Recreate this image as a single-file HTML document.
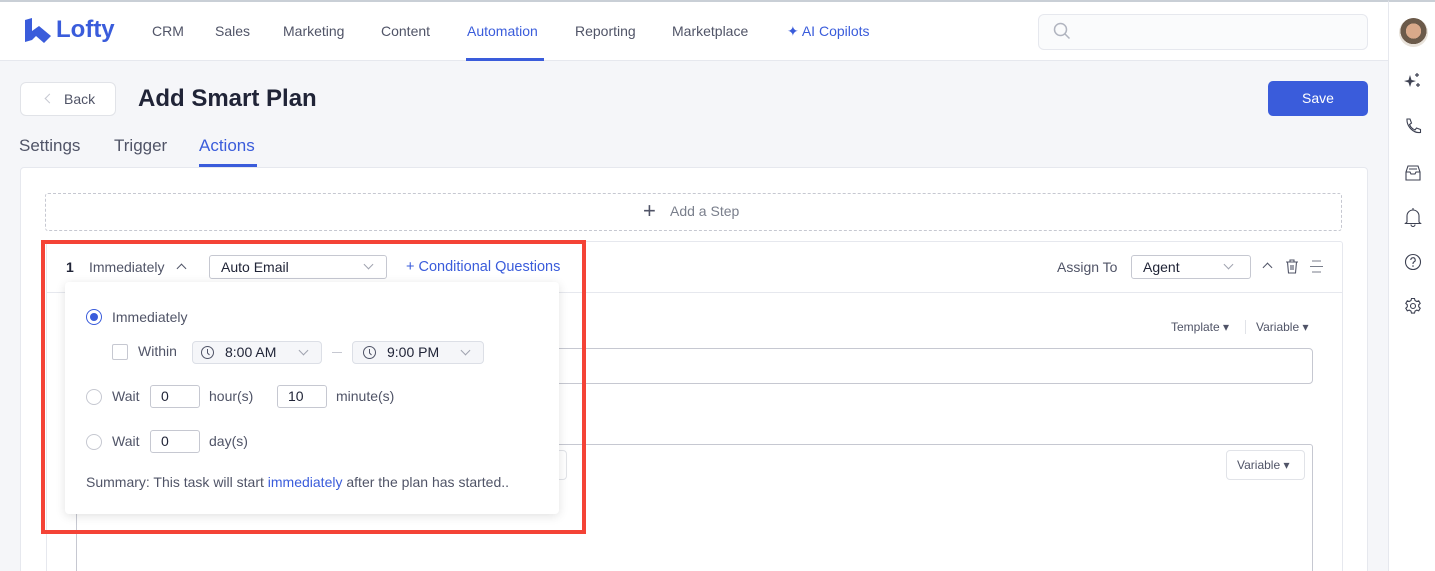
<!DOCTYPE html>
<html style="width:1435px;height:571px;overflow:hidden"><head><meta charset="utf-8"><style>
*{box-sizing:border-box;margin:0;padding:0}
body{width:1435px;height:571px;overflow:hidden;background:#f5f6f9;font-family:"Liberation Sans",sans-serif;color:#202437;position:relative;font-size:14px}
.a{position:absolute}
.nav{left:0;top:0;width:1388px;height:61px;background:#fff;border-top:2px solid #c9cfd6;border-bottom:1px solid #e6e8ee}
.nav span{position:absolute;top:21px;font-size:14px;color:#505467}
.side{left:1388px;top:0;width:47px;height:571px;background:#fff;border-left:1px solid #e6e8ee;border-top:2px solid #c9cfd6}
.sel{position:absolute;border:1px solid #c6c8d1;border-radius:3px;background:#fff;font-size:14px;color:#202437;padding-left:11px;line-height:22px}
.chev{position:absolute;width:7px;height:7px;border-right:1px solid #a0a3af;border-bottom:1px solid #a0a3af;transform:rotate(45deg)}
.radio{position:absolute;width:16px;height:16px;border:1px solid #c6c8d1;border-radius:50%;background:#fff}
.inp{position:absolute;width:50px;height:23px;border:1px solid #c6c8d1;border-radius:3px;padding-left:10px;line-height:21px;font-size:14px}
.t{position:absolute;font-size:14px;color:#505467}
.ts{position:absolute;height:23px;width:130px;background:#f5f6f9;border:1px solid #dcdfe6;border-radius:4px}
</style></head><body>
<div class="a nav">
  <svg class="a" style="left:24px;top:16px" width="28" height="26" viewBox="0 0 28 26"><path d="M1 2 L8 0 L8 13 L15 8 L27 18 L20 25 L12 18 L8 22 L1 24Z" fill="#3a5cdb"/></svg>
  <div class="a" style="left:56px;top:14px;font-size:24px;font-weight:bold;color:#3a5cdb">Lofty</div>
  <span style="left:152px">CRM</span><span style="left:215px">Sales</span><span style="left:283px">Marketing</span><span style="left:381px">Content</span>
  <span style="left:467px;color:#3a5cdb">Automation</span>
  <div class="a" style="left:466px;top:56px;width:78px;height:3px;background:#3a5cdb"></div>
  <span style="left:575px">Reporting</span><span style="left:672px">Marketplace</span>
  <span style="left:787px;color:#3a5cdb">✦ AI Copilots</span>
  <div class="a" style="left:1038px;top:12px;width:330px;height:36px;border:1px solid #e6e8ee;border-radius:6px;background:#fafbfc"></div>
  <svg class="a" style="left:1053px;top:20px" width="18" height="18" viewBox="0 0 18 18"><circle cx="7.5" cy="7.5" r="6" fill="none" stroke="#b0b4bf" stroke-width="1.5"/><path d="M12 12l4.5 4.5" stroke="#b0b4bf" stroke-width="1.5"/></svg>
</div>
<div class="a side">
  <div class="a" style="left:10px;top:16px;width:29px;height:29px;border-radius:50%;background:radial-gradient(circle at 50% 45%,#d9a98a 0 35%,#6b5a4a 36% 60%,#e8e2da 61%)"></div>
  <svg class="a" style="left:14px;top:70px" width="20" height="18" viewBox="0 0 20 18"><path d="M7 3 L8.5 8 L13 9 L8.5 10.5 L7 15 L5.5 10.5 L1 9 L5.5 8Z" fill="#3d4152"/><path d="M14 1v4M12 3h4M15 11v4M13 13h4" stroke="#3d4152" stroke-width="1.2"/></svg>
  <svg class="a" style="left:15px;top:115px" width="18" height="18" viewBox="0 0 18 18"><path d="M3 2l3 0 1.5 4-2 1.5c1 2.5 3 4.5 5.5 5.5l1.5-2 4 1.5v3c-7 1-14-6-13.5-13.5z" fill="none" stroke="#3d4152" stroke-width="1.1"/></svg>
  <svg class="a" style="left:15px;top:162px" width="18" height="18" viewBox="0 0 18 18"><path d="M2 8l2-6h10l2 6v8H2zM2 8h4l1 2h4l1-2h4M5 5h8" fill="none" stroke="#3d4152" stroke-width="1.1"/></svg>
  <svg class="a" style="left:15px;top:205px" width="18" height="20" viewBox="0 0 18 20"><path d="M3 15V9a6 6 0 0 1 12 0v6l1.5 1.5h-15zM7 17.5a2 2 0 0 0 4 0M9 1v2" fill="none" stroke="#3d4152" stroke-width="1.1"/></svg>
  <svg class="a" style="left:15px;top:251px" width="18" height="18" viewBox="0 0 18 18"><circle cx="9" cy="9" r="7.5" fill="none" stroke="#3d4152" stroke-width="1.1"/><path d="M6.8 7a2.2 2.2 0 1 1 3 2c-.8.4-.8 1-.8 2" fill="none" stroke="#3d4152" stroke-width="1.1"/><circle cx="9" cy="13" r=".8" fill="#3d4152"/></svg>
  <svg class="a" style="left:15px;top:295px" width="18" height="18" viewBox="0 0 18 18"><circle cx="9" cy="9" r="2.5" fill="none" stroke="#3d4152" stroke-width="1.1"/><path d="M7.5 1.5h3l.5 2 1.7 1 2-.7 1.5 2.6-1.5 1.4v2l1.5 1.4-1.5 2.6-2-.7-1.7 1-.5 2h-3l-.5-2-1.7-1-2 .7-1.5-2.6 1.5-1.4v-2L1.8 6.4l1.5-2.6 2 .7 1.7-1z" fill="none" stroke="#3d4152" stroke-width="1.1"/></svg>
</div>
<div class="a" style="left:20px;top:82px;width:96px;height:34px;background:#fff;border:1px solid #e1e3e8;border-radius:6px"></div>
<div class="chev" style="left:46px;top:95px;transform:rotate(135deg);border-color:#c6c8d1"></div>
<div class="t" style="left:64px;top:91px;color:#505467">Back</div>
<div class="a" style="left:138px;top:85px;font-size:24px;font-weight:bold;color:#202437">Add Smart Plan</div>
<div class="a" style="left:1268px;top:81px;width:100px;height:35px;background:#3a5cdb;border-radius:5px;color:#fff;text-align:center;line-height:35px;font-size:14px">Save</div>
<div class="a" style="left:19px;top:136px;font-size:17px;color:#505467">Settings</div>
<div class="a" style="left:114px;top:136px;font-size:17px;color:#505467">Trigger</div>
<div class="a" style="left:199px;top:136px;font-size:17px;color:#3a5cdb">Actions</div>
<div class="a" style="left:199px;top:164px;width:58px;height:3px;background:#3a5cdb"></div>
<div class="a" style="left:20px;top:167px;width:1348px;height:420px;background:#fff;border:1px solid #e6e8ee;border-radius:4px"></div>
<div class="a" style="left:45px;top:193px;width:1297px;height:38px;border:1px dashed #c6c8d1;border-radius:3px"></div>
<div class="a" style="left:643px;top:200px;font-size:22px;color:#505467;line-height:22px">+</div>
<div class="t" style="left:670px;top:203px;color:#797e8b">Add a Step</div>
<div class="a" style="left:46px;top:241px;width:1297px;height:340px;border:1px solid #e6e8ee;border-radius:3px"></div>
<div class="a" style="left:46px;top:292px;width:1297px;height:1px;background:#e6e8ee"></div>
<div class="a" style="left:66px;top:259px;font-weight:bold;font-size:14px">1</div>
<div class="t" style="left:89px;top:259px">Immediately</div>
<div class="chev" style="left:178px;top:265px;transform:rotate(225deg);border-color:#505467"></div>
<div class="sel" style="left:209px;top:255px;width:178px;height:24px">Auto Email</div>
<div class="chev" style="left:365px;top:261px"></div>
<div class="t" style="left:406px;top:259px;color:#3a5cdb;font-size:14.5px">+ Conditional Questions</div>
<div class="t" style="left:1057px;top:259px">Assign To</div>
<div class="sel" style="left:1131px;top:255px;width:120px;height:24px">Agent</div>
<div class="chev" style="left:1225px;top:261px"></div>
<div class="chev" style="left:1264px;top:264px;transform:rotate(225deg);border-color:#505467"></div>
<svg class="a" style="left:1285px;top:259px" width="14" height="15" viewBox="0 0 14 15"><path d="M1 3h12M5 3V1h4v2M2.5 3l1 11h7l1-11M6 6v5M8 6v5" fill="none" stroke="#505467" stroke-width="1.1"/></svg>
<svg class="a" style="left:1309px;top:260px" width="15" height="13" viewBox="0 0 15 13"><path d="M3 1h9M1 6.5h13M3 12h9" stroke="#797e8b" stroke-width="1.1"/></svg>
<div class="a" style="left:1171px;top:320px;font-size:12px;color:#505467">Template ▾</div>
<div class="a" style="left:1245px;top:320px;width:1px;height:14px;background:#e1e3e8"></div>
<div class="a" style="left:1256px;top:320px;font-size:12px;color:#505467">Variable ▾</div>
<div class="a" style="left:540px;top:348px;width:773px;height:36px;border:1px solid #c6c8d1;border-radius:4px"></div>
<div class="a" style="left:76px;top:444px;width:1237px;height:140px;border:1px solid #c6c8d1;border-radius:3px"></div>
<div class="a" style="left:540px;top:450px;width:27px;height:30px;border:1px solid #e1e3e8;border-radius:4px"></div>
<div class="a" style="left:1226px;top:450px;width:79px;height:30px;border:1px solid #e1e3e8;border-radius:4px;font-size:12px;color:#505467;padding:7px 0 0 10px">Variable ▾</div>
<div class="a" style="left:65px;top:282px;width:494px;height:232px;background:#fff;border-radius:4px;box-shadow:0 2px 10px rgba(0,0,0,.12)"></div>
<div class="radio" style="left:86px;top:309px;border-color:#3a5cdb"><div style="margin:3px;width:8px;height:8px;border-radius:50%;background:#3a5cdb"></div></div>
<div class="t" style="left:112px;top:309px">Immediately</div>
<div class="a" style="left:112px;top:344px;width:16px;height:16px;border:1px solid #c6c8d1;border-radius:2px"></div>
<div class="t" style="left:138px;top:343px">Within</div>
<div class="ts" style="left:192px;top:341px"></div>
<svg class="a" style="left:200px;top:345px" width="15" height="15" viewBox="0 0 15 15"><circle cx="7.5" cy="7.5" r="6" fill="none" stroke="#505467"/><path d="M7.5 4v4l2 2" fill="none" stroke="#505467"/></svg>
<div class="t" style="left:225px;top:344px;color:#202437">8:00 AM</div>
<div class="chev" style="left:300px;top:347px"></div>
<div class="a" style="left:332px;top:352px;width:10px;height:1px;background:#c6c8d1"></div>
<div class="ts" style="left:352px;top:341px;width:132px"></div>
<svg class="a" style="left:362px;top:345px" width="15" height="15" viewBox="0 0 15 15"><circle cx="7.5" cy="7.5" r="6" fill="none" stroke="#505467"/><path d="M7.5 4v4l2 2" fill="none" stroke="#505467"/></svg>
<div class="t" style="left:387px;top:344px;color:#202437">9:00 PM</div>
<div class="chev" style="left:462px;top:347px"></div>
<div class="radio" style="left:86px;top:389px"></div>
<div class="t" style="left:112px;top:388px">Wait</div>
<div class="inp" style="left:150px;top:385px">0</div>
<div class="t" style="left:209px;top:388px">hour(s)</div>
<div class="inp" style="left:277px;top:385px">10</div>
<div class="t" style="left:336px;top:388px">minute(s)</div>
<div class="radio" style="left:86px;top:434px"></div>
<div class="t" style="left:112px;top:433px">Wait</div>
<div class="inp" style="left:150px;top:430px">0</div>
<div class="t" style="left:209px;top:433px">day(s)</div>
<div class="t" style="left:86px;top:474px">Summary: This task will start <span style="color:#3a5cdb">immediately</span> after the plan has started..</div>
<div class="a" style="left:41px;top:240px;width:545px;height:294px;border:4px solid #f44336"></div>
</body></html>
